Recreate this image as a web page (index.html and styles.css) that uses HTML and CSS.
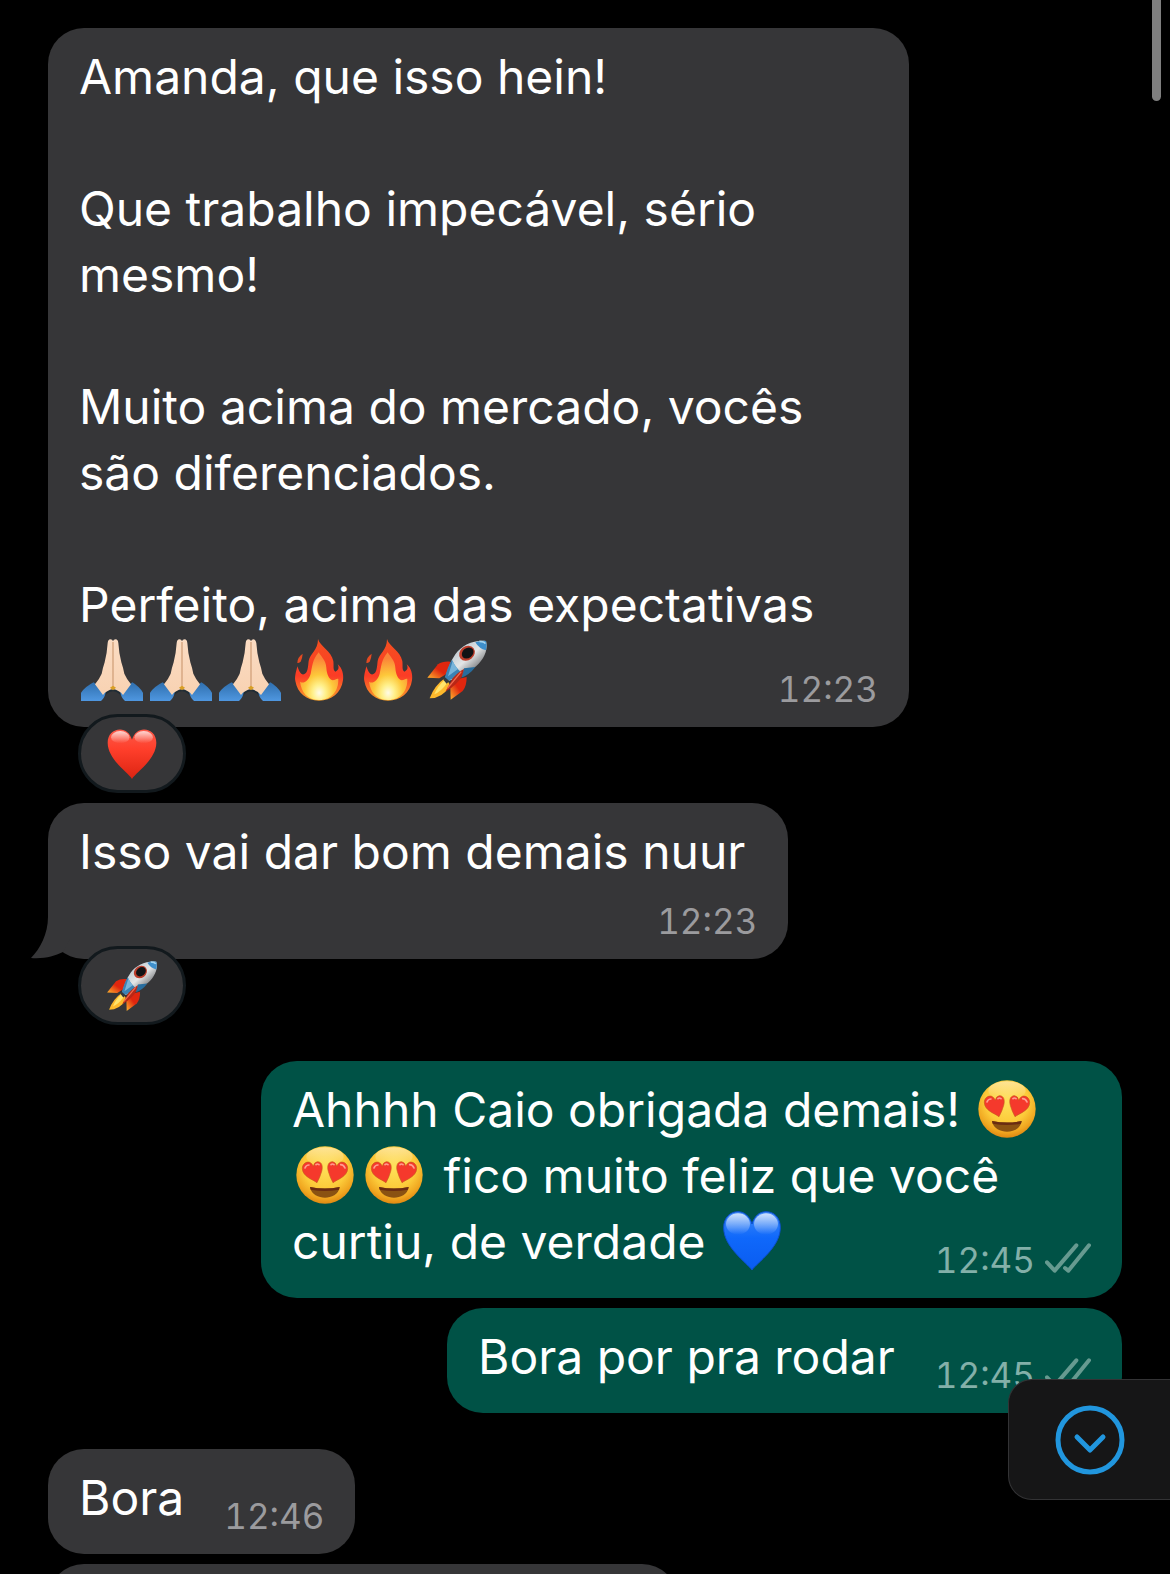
FILE: index.html
```html
<!DOCTYPE html>
<html lang="pt-BR">
<head>
    <meta charset="UTF-8">
    <meta name="viewport" content="width=device-width, initial-scale=1.0">
    <title>Conversa</title>
    <link rel="stylesheet" href="styles.css">
</head>
<body>
    <!-- emoji shapes -->
    <svg class="sprite" aria-hidden="true">
        <defs>
            <linearGradient id="skin" x1="0" y1="0" x2="0" y2="1">
                <stop offset="0" stop-color="#fbdcc3"/>
                <stop offset="1" stop-color="#f8d2b2"/>
            </linearGradient>
            <linearGradient id="sleeve" x1="0" y1="0" x2="0" y2="1">
                <stop offset="0" stop-color="#2f6fae"/>
                <stop offset="1" stop-color="#4f97e0"/>
            </linearGradient>
            <linearGradient id="fireOuter" x1="0" y1="0" x2="0" y2="1">
                <stop offset="0" stop-color="#f4501f"/>
                <stop offset="0.6" stop-color="#fb3c26"/>
                <stop offset="1" stop-color="#f9a12a"/>
            </linearGradient>
            <radialGradient id="fireInner" cx="0.5" cy="0.85" r="0.85">
                <stop offset="0" stop-color="#fffbe6"/>
                <stop offset="0.2" stop-color="#fff08a"/>
                <stop offset="0.45" stop-color="#fdc83a"/>
                <stop offset="0.85" stop-color="#fb8438"/>
            </radialGradient>
            <linearGradient id="hull" x1="0.2" y1="0.2" x2="0.75" y2="0.8">
                <stop offset="0" stop-color="#b9c5cd"/>
                <stop offset="0.5" stop-color="#e4e6e7"/>
                <stop offset="1" stop-color="#6c6e71"/>
            </linearGradient>
            <linearGradient id="fin" x1="1" y1="0" x2="0" y2="1">
                <stop offset="0.5" stop-color="#e0260e"/>
                <stop offset="1" stop-color="#ffb52e"/>
            </linearGradient>
            <linearGradient id="redHeart" x1="0" y1="0" x2="0" y2="1">
                <stop offset="0" stop-color="#fb5a4a"/>
                <stop offset="0.4" stop-color="#ff3f2b"/>
                <stop offset="1" stop-color="#dc2412"/>
            </linearGradient>
            <linearGradient id="blueHeart" x1="0" y1="0" x2="0" y2="1">
                <stop offset="0" stop-color="#3f8af5"/>
                <stop offset="0.45" stop-color="#0f68fb"/>
                <stop offset="1" stop-color="#0a5cf0"/>
            </linearGradient>
            <linearGradient id="shine" x1="0" y1="0" x2="0" y2="1">
                <stop offset="0" stop-color="#fff" stop-opacity="0.75"/>
                <stop offset="1" stop-color="#fff" stop-opacity="0"/>
            </linearGradient>
            <radialGradient id="face" cx="0.5" cy="0.36" r="0.68">
                <stop offset="0" stop-color="#ffe15a"/>
                <stop offset="0.55" stop-color="#fccb3a"/>
                <stop offset="0.8" stop-color="#f0a620"/>
                <stop offset="1" stop-color="#d97c0c"/>
            </radialGradient>

            <symbol id="pray" viewBox="0 0 186 186">
                <path d="M64 176L74 156L96 144L118 156L128 176L114 164Q96 150 78 164Z" fill="#1f2c36"/>
                <path d="M0 186V161Q14 142 38 130L74 160Q72 176 60 186Z" fill="url(#sleeve)"/>
                <path d="M186 186V161Q174 142 154 130L118 160Q120 176 132 186Z" fill="url(#sleeve)"/>
                <path d="M97 8Q94 1 88 1Q81 2 80 12Q78 44 71 70Q65 88 62 104Q54 122 42 136L66 168Q76 154 97 150Z" fill="url(#skin)"/>
                <path d="M95 8Q98 1 104 1Q111 2 112 12Q114 44 121 70Q127 88 130 104Q138 122 150 136L126 168Q116 154 95 150Z" fill="url(#skin)"/>
                <path d="M96 9V146" stroke="#d3a27c" stroke-width="4"/>
                <path d="M87 146L96 140L105 146L96 154Z" fill="#d99f24"/>
            </symbol>

            <symbol id="fire" viewBox="0 0 186 186">
                <path d="M44 44Q43 58 38 68Q30 74 28 71Q28 55 44 44Z" fill="#e44a22"/>
                <path d="M90 0C96 22 130 36 136 66C138 82 134 92 142 98C152 94 154 86 149 76C162 86 168 106 165 124C160 162 130 185 93 185C56 185 28 162 22 126C19 110 26 94 28 82C34 98 38 108 48 106C60 102 60 82 62 66C66 44 90 34 90 0Z" fill="url(#fireOuter)"/>
                <path d="M92 40C100 54 114 64 115 86C116 104 122 120 134 124C142 124 146 118 151 120C152 156 130 183 94 183C58 183 40 160 36 128C46 136 62 126 68 104C73 84 72 64 92 40Z" fill="url(#fireInner)"/>
            </symbol>

            <symbol id="rocket" viewBox="0 0 186 186">
                <path d="M74 68Q50 66 36 76L4 116L40 118L66 102Z" fill="url(#fin)"/>
                <path d="M122 114Q122 142 110 156L74 182L73 148L96 120Z" fill="url(#fin)"/>
                <path d="M58 116Q24 140 11 178Q48 178 74 140Z" fill="#fdb92c"/>
                <path d="M56 122Q34 142 25 166Q44 158 62 134Z" fill="#ffe46c"/>
                <path d="M180 6C144 2 108 18 88 46Q70 72 58 116L66 126Q112 114 142 88C170 68 188 36 180 6Z" fill="url(#hull)"/>
                <path d="M180 6Q162 4 148 10Q160 30 180 34Q184 18 180 6Z" fill="#3e8fcb"/>
                <path d="M160 7Q174 7 178 14" fill="none" stroke="#a4d4ef" stroke-width="5"/>
                <path d="M78 62Q88 88 114 106L64 126L56 118Q64 84 78 62Z" fill="#3c82b4"/>
                <path d="M80 66Q86 80 96 90L66 112Z" fill="#78b4da"/>
                <path d="M114 88L148 84Q130 108 106 116Z" fill="#286d9e"/>
                <path d="M56 114L70 126L62 134L52 122Z" fill="#34383c"/>
                <path d="M114 90Q98 98 80 118L58 158Q94 138 108 112Z" fill="#b92716"/>
                <path d="M106 98L64 148" stroke="#f26d4f" stroke-width="4"/>
                <ellipse cx="123" cy="43" rx="25" ry="21" fill="#bb3d2b" transform="rotate(-38 123 43)"/>
                <ellipse cx="125" cy="42" rx="19" ry="15" fill="#111315" transform="rotate(-38 125 42)"/>
            </symbol>

            <symbol id="heart" viewBox="0 0 186 186">
                <path d="M93 182C78 158 6 112 6 53C6 22 26 5 50 5C70 5 86 18 93 42C100 18 116 5 136 5C160 5 180 22 180 53C180 112 108 158 93 182Z" fill="url(#redHeart)"/>
                <ellipse cx="51" cy="33" rx="33" ry="22" fill="url(#shine)"/>
                <ellipse cx="135" cy="33" rx="33" ry="22" fill="url(#shine)"/>
            </symbol>

            <symbol id="heart-blue" viewBox="0 0 186 186">
                <path d="M93 180C78 158 8 112 8 53C8 22 28 5 51 5C70 5 86 18 93 42C100 18 116 5 135 5C159 5 178 22 178 53C178 112 108 158 93 180Z" fill="url(#blueHeart)" stroke="#0c4fd0" stroke-width="3"/>
                <ellipse cx="51" cy="42" rx="36" ry="32" fill="url(#shine)"/>
                <ellipse cx="135" cy="42" rx="36" ry="32" fill="url(#shine)"/>
            </symbol>

            <symbol id="heart-eyes" viewBox="0 0 186 186">
                <circle cx="93" cy="93" r="86" fill="url(#face)"/>
                <ellipse cx="93" cy="38" rx="56" ry="28" fill="url(#shine)" opacity="0.6"/>
                <path d="M69 116C56 106 26 98 25 74C25 60 36 52 47 55Q54 58 58 67Q60 55 70 53C84 53 87 67 83 82Q78 100 69 116Z" fill="#f5392c" stroke="#c9571c" stroke-width="2"/>
                <path d="M117 116C130 106 160 98 161 74C161 60 150 52 139 55Q132 58 128 67Q126 55 116 53C102 53 99 67 103 82Q108 100 117 116Z" fill="#f5392c" stroke="#c9571c" stroke-width="2"/>
                <path d="M33 72Q36 63 45 63M66 62Q70 58 75 62M111 62Q115 58 120 62M140 62Q149 62 153 72" fill="none" stroke="#ff9d90" stroke-width="5" stroke-linecap="round"/>
                <path d="M48 129Q93 138 137 129C134 152 112 161 93 161S52 152 48 129Z" fill="#8a5212"/>
                <path d="M48 129Q93 138 137 129L135 137Q93 145 50 137Z" fill="#6a2c12"/>
            </symbol>

            <symbol id="ticks" viewBox="0 0 138 90">
                <path d="M6 58L29 83L94 7M60 75L70 83L132 7" fill="none" stroke="currentColor" stroke-width="12" stroke-linecap="round" stroke-linejoin="round"/>
            </symbol>
        </defs>
    </svg>

    <main class="chat">
        <section class="group">
            <article class="message">
                <div class="bubble wide">
                    <p>Amanda, que isso hein!</p>
                    <p>Que trabalho impecável, sério<br>mesmo!</p>
                    <p>Muito acima do mercado, vocês<br>são diferenciados.</p>
                    <p>Perfeito, acima das expectativas</p>
                    <div class="last-line">
                        <span class="text"><svg class="emoji" role="img" aria-label="🙏🏻"><use href="#pray"/></svg><svg class="emoji" role="img" aria-label="🙏🏻"><use href="#pray"/></svg><svg class="emoji" role="img" aria-label="🙏🏻"><use href="#pray"/></svg><svg class="emoji" role="img" aria-label="🔥"><use href="#fire"/></svg><svg class="emoji" role="img" aria-label="🔥"><use href="#fire"/></svg><svg class="emoji" role="img" aria-label="🚀"><use href="#rocket"/></svg></span>
                        <time>12:23</time>
                    </div>
                </div>
                <button type="button" class="reaction" aria-label="Reação ❤️"><svg><use href="#heart"/></svg></button>
            </article>

            <article class="message">
                <div class="bubble stacked">
                    <p>Isso vai dar bom demais nuur</p>
                    <time>12:23</time>
                    <svg class="tail" viewBox="0 0 50 50" aria-hidden="true">
                        <path d="M18 0V8C18 25 10 40 1 49C15 50 24 47 33 43L40 30V0Z" fill="currentColor"/>
                    </svg>
                </div>
                <button type="button" class="reaction" aria-label="Reação 🚀"><svg><use href="#rocket"/></svg></button>
            </article>
        </section>

        <section class="group sent">
            <article class="message">
                <div class="bubble wide">
                    <p>Ahhhh Caio obrigada demais! <svg class="emoji" role="img" aria-label="😍"><use href="#heart-eyes"/></svg><br><svg class="emoji" role="img" aria-label="😍"><use href="#heart-eyes"/></svg><svg class="emoji" role="img" aria-label="😍"><use href="#heart-eyes"/></svg> fico muito feliz que você</p>
                    <div class="last-line">
                        <span class="text">curtiu, de verdade <svg class="emoji" role="img" aria-label="💙"><use href="#heart-blue"/></svg></span>
                        <time>12:45</time>
                        <svg class="ticks" role="img" aria-label="Entregue"><use href="#ticks"/></svg>
                    </div>
                </div>
            </article>

            <article class="message">
                <div class="bubble">
                    <div class="last-line">
                        <span class="text">Bora por pra rodar</span>
                        <time>12:45</time>
                        <svg class="ticks" role="img" aria-label="Entregue"><use href="#ticks"/></svg>
                    </div>
                </div>
            </article>
        </section>

        <section class="group">
            <article class="message">
                <div class="bubble">
                    <div class="last-line">
                        <span class="text">Bora</span>
                        <time>12:46</time>
                    </div>
                </div>
            </article>

            <article class="message">
                <div class="bubble next"></div>
            </article>
        </section>
    </main>

    <div class="scroll-thumb"></div>

    <button type="button" class="to-bottom" aria-label="Ir para o fim">
        <svg viewBox="0 0 70 70">
            <circle cx="35" cy="35" r="32" fill="none" stroke="currentColor" stroke-width="5"/>
            <path d="M22 32L35 45L48 32" fill="none" stroke="currentColor" stroke-width="5" stroke-linecap="round" stroke-linejoin="round"/>
        </svg>
    </button>
</body>
</html>
```
FILE: styles.css
```css
body {
    margin: 0;
    height: 100vh;
    overflow: hidden;
    background-color: #000;
    color: #fff;
    font-family: Inter, "Liberation Sans", sans-serif;
    font-size: 48px;
    line-height: 66px;
}
p {
    margin: 0;
}
.sprite {
    position: absolute;
    width: 0;
    height: 0;
}

/* conversation */
.chat {
    display: flex;
    flex-direction: column;
    gap: 36px;
    padding: 28px 48px 0;
}
.group {
    display: flex;
    flex-direction: column;
    gap: 10px;
}
.message {
    display: flex;
    flex-direction: column;
    align-items: flex-start;
}
.sent .message {
    align-items: flex-end;
}

/* bubbles */
.bubble {
    position: relative;
    box-sizing: border-box;
    max-width: 100%;
    padding: 16px 31px 18px;
    border-radius: 36px;
    background-color: #363638;
}
.sent .bubble {
    background-color: #005246;
}
.wide {
    width: 861px;
}
.wide p + p {
    margin-top: 66px;
}
.last-line {
    display: flex;
    align-items: flex-end;
}
.text {
    flex: 1;
    padding-bottom: 5px;
    margin-right: 40px;
}
.stacked {
    display: flex;
    flex-direction: column;
}
.stacked p {
    margin-right: 12px;
}
.stacked time {
    align-self: flex-end;
    margin-top: 16px;
}
.next {
    width: 630px;
    height: 106px;
}
time {
    color: #9b9b9e;
    font-size: 35px;
    font-variant-numeric: tabular-nums;
    line-height: 40px;
}
.sent time {
    color: #83b0a9;
}
.tail {
    position: absolute;
    left: -18px;
    bottom: 0;
    width: 50px;
    height: 50px;
    color: #363638;
}
.ticks {
    width: 46px;
    height: 30px;
    margin: 0 0 7px 10px;
    color: #669a90;
}
.emoji {
    width: 62px;
    height: 62px;
    margin: 0 5px 0 2px;
    vertical-align: -13px;
}

/* reaction under a bubble */
.reaction {
    display: flex;
    align-items: center;
    justify-content: center;
    position: relative;
    width: 108px;
    height: 79px;
    margin: -13px 0 0 30px;
    padding: 0;
    border: 3px solid #12191d;
    border-radius: 40px;
    background-color: #363638;
}
.reaction svg {
    width: 52px;
    height: 52px;
}

/* over the conversation */
.scroll-thumb {
    position: fixed;
    top: 0;
    right: 9px;
    width: 9px;
    height: 101px;
    border-radius: 0 0 5px 5px;
    background-color: #7f7f7f;
}
.to-bottom {
    display: flex;
    align-items: center;
    justify-content: center;
    position: fixed;
    right: 0;
    bottom: 74px;
    width: 162px;
    height: 121px;
    padding: 0;
    border: 1px solid #333335;
    border-right: none;
    border-radius: 24px 0 0 24px;
    background-color: #161617;
    color: #2196de;
}
.to-bottom svg {
    width: 70px;
    height: 70px;
}
```
